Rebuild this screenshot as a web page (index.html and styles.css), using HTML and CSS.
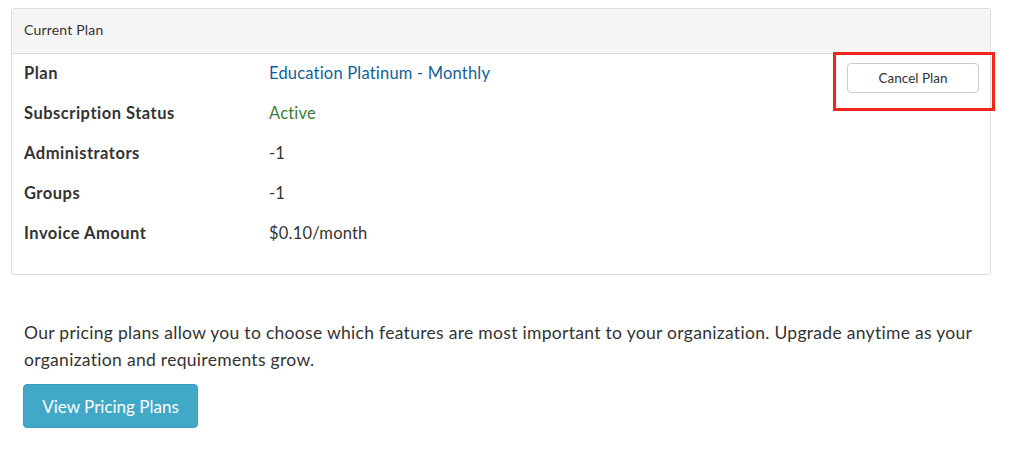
FILE: index.html
```html
<!DOCTYPE html>
<html>
<head>
<meta charset="utf-8">
<link rel="stylesheet" href="styles.css">
</head>
<body>
<div class="page">
  <div class="panel">
    <div class="panel-heading">Current Plan</div>
    <div class="panel-body">
      <div class="rows">
        <div class="row"><div class="label">Plan</div><div class="value link">Education Platinum - Monthly</div></div>
        <div class="row"><div class="label">Subscription Status</div><div class="value active">Active</div></div>
        <div class="row"><div class="label">Administrators</div><div class="value">-1</div></div>
        <div class="row"><div class="label">Groups</div><div class="value">-1</div></div>
        <div class="row"><div class="label">Invoice Amount</div><div class="value">$0.10/month</div></div>
      </div>
      <div class="actions">
        <button class="btn-cancel">Cancel Plan</button>
        <div class="highlight"></div>
      </div>
    </div>
  </div>
  <p class="intro">Our pricing plans allow you to choose which features are most important to your organization. Upgrade anytime as your organization and requirements grow.</p>
  <button class="btn-primary">View Pricing Plans</button>
</div>
</body>
</html>
```

FILE: styles.css
```css
* { box-sizing: border-box; }
body {
  margin: 0;
  background: #fff;
  font-family: Lato, "Noto Sans", sans-serif;
  color: #333;
}
.page {
  padding: 8px 0 0 11px;
  width: 991px;
}
.panel {
  border: 1px solid #ddd;
  border-radius: 3px;
  background: #fff;
}
.panel-heading {
  height: 45px;
  background: #f5f5f5;
  border-bottom: 1px solid #ddd;
  padding: 0 12px 4px;
  display: flex;
  align-items: center;
  font-size: 14px;
  letter-spacing: 0.2px;
  color: #333;
}
.panel-body {
  display: flex;
  justify-content: space-between;
  align-items: flex-start;
  padding: 0 11px 21px 12px;
}
.rows { display: flex; flex-direction: column; margin-top: -1px; }
.row {
  height: 40px;
  display: flex;
  align-items: center;
  font-size: 16.5px;
}
.label { width: 245px; font-weight: 700; color: #333; letter-spacing: 0.5px; }
.value { color: #333; letter-spacing: 0.2px; }
.link { color: #135f98; }
.active { color: #3b7d36; }
.actions { position: relative; margin-top: 9px; }
.btn-cancel {
  width: 132px;
  height: 30px;
  border: 1px solid #ccc;
  border-radius: 4px;
  background: #fff;
  color: #333;
  font-family: Lato, "Noto Sans", sans-serif;
  font-size: 13.5px;
  padding: 0;
}
.highlight {
  position: absolute;
  left: -14px;
  top: -11px;
  right: -16px;
  bottom: -18px;
  border: 3px solid #f0281c;
  pointer-events: none;
}
.intro {
  margin: 44px 0 11px 13px;
  font-size: 17.5px;
  line-height: 27px;
  letter-spacing: 0.3px;
  color: #333;
}
.btn-primary {
  margin-left: 12px;
  width: 175px;
  height: 44px;
  background: #41a8c8;
  border: 1px solid #3a9fc0;
  border-radius: 4px;
  color: #fff;
  font-family: Lato, "Noto Sans", sans-serif;
  font-size: 17px;
  padding: 0;
}
```
